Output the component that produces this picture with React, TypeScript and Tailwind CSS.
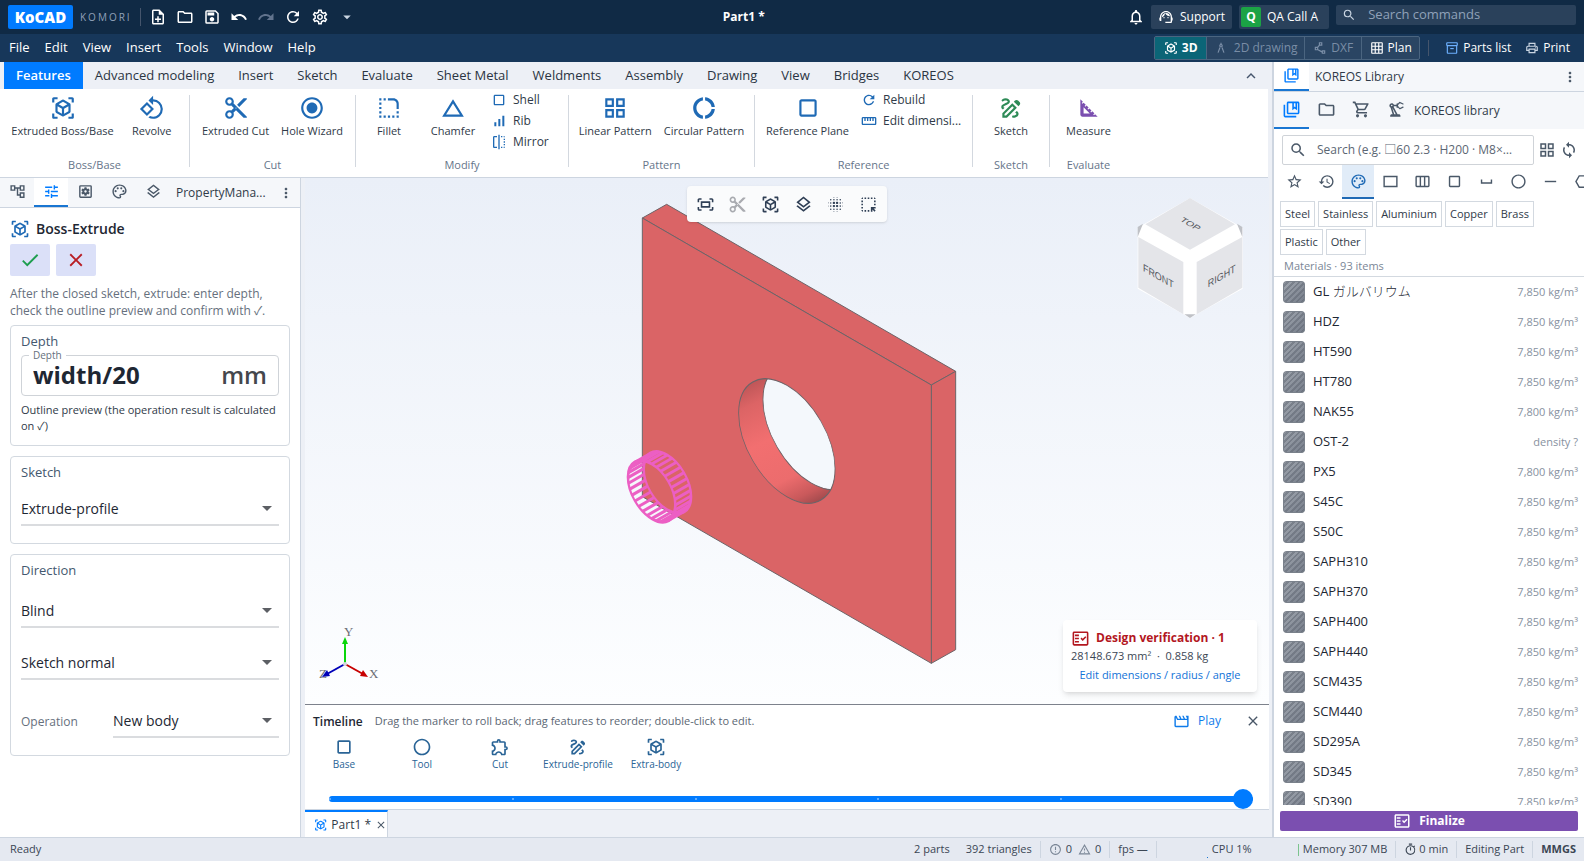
import React, { useState } from "react";
import type { IconType } from "react-icons";
import {
  MdArrowDropDown,
  MdBlurOn,
  MdChangeHistory,
  MdCheck,
  MdClose,
  MdContentCut,
  MdDonutLarge,
  MdErrorOutline,
  MdExpandLess,
  MdHighlightAlt,
  MdHistory,
  MdHorizontalRule,
  MdMoreVert,
  MdOutlineAccountTree,
  MdOutlineArchitecture,
  MdOutlineCircle,
  MdOutlineCollectionsBookmark,
  MdOutlineCropSquare,
  MdOutlineDraw,
  MdOutlineExtension,
  MdOutlineFactCheck,
  MdOutlineFitScreen,
  MdOutlineFlip,
  MdOutlineFolder,
  MdOutlineGridOn,
  MdOutlineGridView,
  MdOutlineHexagon,
  MdOutlineInventory2,
  MdOutlineLayers,
  MdOutlineMovieCreation,
  MdOutlineNoteAdd,
  MdOutlineNotifications,
  MdOutlinePalette,
  MdOutlinePolyline,
  MdOutlinePrecisionManufacturing,
  MdOutlinePrint,
  MdOutlineRectangle,
  MdOutlineSave,
  MdOutlineSettings,
  MdOutlineSettingsApplications,
  MdOutlineShoppingCart,
  MdOutlineStraighten,
  MdOutlineTimer,
  MdOutlineViewWeek,
  MdOutlineWarningAmber,
  MdRadioButtonChecked,
  MdRedo,
  MdRefresh,
  MdRotate90DegreesCcw,
  MdRoundedCorner,
  MdSearch,
  MdSignalCellularAlt,
  MdSpaceBar,
  MdSquareFoot,
  MdStarOutline,
  MdSupportAgent,
  MdSync,
  MdTune,
  MdUndo,
  MdViewInAr,
} from "react-icons/md";

interface ToolType {
  label: string;
  icon: IconType;
  color?: string;
}

interface GroupType {
  title: string;
  width: string;
  tools: ToolType[];
  small?: ToolType[];
  smallWidth?: string;
}

interface MaterialType {
  name: string;
  kana?: string;
  density: string;
}

const menus = ["File", "Edit", "View", "Insert", "Tools", "Window", "Help"];

const ribbonTabs = [
  "Features",
  "Advanced modeling",
  "Insert",
  "Sketch",
  "Evaluate",
  "Sheet Metal",
  "Weldments",
  "Assembly",
  "Drawing",
  "View",
  "Bridges",
  "KOREOS",
];

const quickActions: ToolType[] = [
  { label: "New", icon: MdOutlineNoteAdd },
  { label: "Open", icon: MdOutlineFolder },
  { label: "Save", icon: MdOutlineSave },
  { label: "Undo", icon: MdUndo },
  { label: "Redo", icon: MdRedo, color: "text-slate-500" },
  { label: "Rebuild", icon: MdRefresh },
  { label: "Settings", icon: MdOutlineSettings },
  { label: "More", icon: MdArrowDropDown, color: "text-slate-300" },
];

const groups: GroupType[] = [
  {
    title: "Boss/Base",
    width: "w-[190px]",
    tools: [
      { label: "Extruded Boss/Base", icon: MdViewInAr },
      { label: "Revolve", icon: MdRotate90DegreesCcw },
    ],
  },
  {
    title: "Cut",
    width: "w-[166px]",
    tools: [
      { label: "Extruded Cut", icon: MdContentCut },
      { label: "Hole Wizard", icon: MdRadioButtonChecked },
    ],
  },
  {
    title: "Modify",
    width: "w-[213px]",
    tools: [
      { label: "Fillet", icon: MdRoundedCorner },
      { label: "Chamfer", icon: MdChangeHistory },
    ],
    small: [
      { label: "Shell", icon: MdOutlineCropSquare },
      { label: "Rib", icon: MdSignalCellularAlt },
      { label: "Mirror", icon: MdOutlineFlip },
    ],
    smallWidth: "w-[70px]",
  },
  {
    title: "Pattern",
    width: "w-[186px]",
    tools: [
      { label: "Linear Pattern", icon: MdOutlineGridView },
      { label: "Circular Pattern", icon: MdDonutLarge },
    ],
  },
  {
    title: "Reference",
    width: "w-[218px]",
    tools: [{ label: "Reference Plane", icon: MdOutlineCropSquare }],
    small: [
      { label: "Rebuild", icon: MdRefresh },
      { label: "Edit dimensi...", icon: MdOutlineStraighten },
    ],
    smallWidth: "w-[100px]",
  },
  {
    title: "Sketch",
    width: "w-[77px]",
    tools: [{ label: "Sketch", icon: MdOutlineDraw, color: "text-[#2e8b57]" }],
  },
  {
    title: "Evaluate",
    width: "w-[77px]",
    tools: [{ label: "Measure", icon: MdSquareFoot, color: "text-[#7b4fb0]" }],
  },
];

const panelTabs: ToolType[] = [
  { label: "Feature tree", icon: MdOutlineAccountTree },
  { label: "Properties", icon: MdTune },
  { label: "Configurations", icon: MdOutlineSettingsApplications },
  { label: "Appearance", icon: MdOutlinePalette },
  { label: "Layers", icon: MdOutlineLayers },
];

const viewTools: ToolType[] = [
  { label: "Fit", icon: MdOutlineFitScreen },
  { label: "Section", icon: MdContentCut, color: "text-[#a9abb0]" },
  { label: "Orientation", icon: MdViewInAr },
  { label: "Display style", icon: MdOutlineLayers },
  { label: "Transparency", icon: MdBlurOn },
  { label: "Selection", icon: MdHighlightAlt },
];

const features: ToolType[] = [
  { label: "Base", icon: MdOutlineCropSquare },
  { label: "Tool", icon: MdOutlineCircle },
  { label: "Cut", icon: MdOutlineExtension },
  { label: "Extrude-profile", icon: MdOutlineDraw },
  { label: "Extra-body", icon: MdViewInAr },
];

const libraryTabs: ToolType[] = [
  { label: "Library", icon: MdOutlineCollectionsBookmark },
  { label: "Files", icon: MdOutlineFolder },
  { label: "Cart", icon: MdOutlineShoppingCart },
  { label: "Machines", icon: MdOutlinePrecisionManufacturing },
];

const categories: ToolType[] = [
  { label: "Favourites", icon: MdStarOutline },
  { label: "Recent", icon: MdHistory },
  { label: "Materials", icon: MdOutlinePalette },
  { label: "Plates", icon: MdOutlineRectangle },
  { label: "Gratings", icon: MdOutlineViewWeek },
  { label: "Square tubes", icon: MdOutlineCropSquare },
  { label: "Channels", icon: MdSpaceBar },
  { label: "Round tubes", icon: MdOutlineCircle },
  { label: "Flat bars", icon: MdHorizontalRule },
  { label: "Bolts", icon: MdOutlineHexagon },
];

const chips = ["Steel", "Stainless", "Aluminium", "Copper", "Brass", "Plastic", "Other"];

const materials: MaterialType[] = [
  { name: "GL", kana: "ガルバリウム", density: "7,850 kg/m³" },
  { name: "HDZ", density: "7,850 kg/m³" },
  { name: "HT590", density: "7,850 kg/m³" },
  { name: "HT780", density: "7,850 kg/m³" },
  { name: "NAK55", density: "7,800 kg/m³" },
  { name: "OST-2", density: "density ?" },
  { name: "PX5", density: "7,800 kg/m³" },
  { name: "S45C", density: "7,850 kg/m³" },
  { name: "S50C", density: "7,850 kg/m³" },
  { name: "SAPH310", density: "7,850 kg/m³" },
  { name: "SAPH370", density: "7,850 kg/m³" },
  { name: "SAPH400", density: "7,850 kg/m³" },
  { name: "SAPH440", density: "7,850 kg/m³" },
  { name: "SCM435", density: "7,850 kg/m³" },
  { name: "SCM440", density: "7,850 kg/m³" },
  { name: "SD295A", density: "7,850 kg/m³" },
  { name: "SD345", density: "7,850 kg/m³" },
  { name: "SD390", density: "7,850 kg/m³" },
];

function TitleBar() {
  return (
    <header className="flex h-[34px] shrink-0 items-center bg-[#102a45] px-2 text-white">
      <div className="flex h-6 w-[65px] items-center justify-center rounded-xs bg-[#007bff] text-[15px] font-extrabold">
        KoCAD
      </div>
      <span className="ml-[7px] text-[10px] tracking-[2px] text-slate-400">KOMORI</span>
      <span className="mr-1 ml-2 h-[18px] w-px bg-slate-600" />
      <div className="flex items-center">
        {quickActions.map(a => (
          <button
            key={a.label}
            aria-label={a.label}
            className={`flex w-[27px] justify-center ${a.color ?? ""}`}
          >
            <a.icon size={18} />
          </button>
        ))}
      </div>
      <h1 className="flex-1 text-center text-xs font-bold">Part1 *</h1>
      <button aria-label="Notifications" className="mr-1.5">
        <MdOutlineNotifications size={18} />
      </button>
      <button className="mr-[7px] flex h-6 w-[81px] items-center justify-center gap-1.5 rounded-xs bg-[#2a415b] text-xs font-medium">
        <MdSupportAgent size={16} />
        Support
      </button>
      <button className="mr-[7px] flex h-6 w-[90px] items-center gap-1.5 rounded-xs bg-[#2a415b] pl-0.5 text-xs font-medium">
        <span className="flex size-5 items-center justify-center rounded-xs bg-[#1ba345] font-bold">
          Q
        </span>
        QA Call A
      </button>
      <label className="mb-1 flex h-5 w-[240px] items-center rounded-xs bg-[#2a415b] pl-1.5">
        <MdSearch size={16} className="text-slate-300" />
        <input
          aria-label="Search commands"
          placeholder="Search commands"
          className="ml-3 w-full bg-transparent text-[13px] outline-none placeholder:text-slate-400"
        />
      </label>
    </header>
  );
}

function MenuBar() {
  return (
    <nav className="flex h-7 shrink-0 items-center bg-[#17375a] pr-[14px] pl-[9px] text-[13px] font-medium text-white">
      <div className="flex gap-[15px]">
        {menus.map(m => (
          <button key={m}>{m}</button>
        ))}
      </div>
      <div className="ml-auto flex h-6 overflow-hidden rounded-xs border border-[#4b6580] bg-[#2a4563] text-xs">
        <button className="flex w-[51px] items-center justify-center gap-1 bg-[#0b6577] font-bold">
          <MdViewInAr size={14} />
          3D
        </button>
        <button className="flex w-[98px] items-center justify-center gap-1.5 border-l border-[#4b6580] text-slate-400/80">
          <MdOutlineArchitecture size={14} />
          2D drawing
        </button>
        <button className="flex w-[57px] items-center justify-center gap-1 border-l border-[#4b6580] text-slate-400/80">
          <MdOutlinePolyline size={14} />
          DXF
        </button>
        <button className="flex w-[58px] items-center justify-center gap-1 border-l border-[#4b6580]">
          <MdOutlineGridOn size={14} />
          Plan
        </button>
      </div>
      <span className="mx-2 h-4 w-px bg-slate-600" />
      <button className="ml-2 flex items-center gap-1 text-xs">
        <MdOutlineInventory2 size={14} className="text-[#6db1ff]" />
        Parts list
      </button>
      <button className="ml-3.5 flex items-center gap-1 text-xs">
        <MdOutlinePrint size={14} className="text-slate-300" />
        Print
      </button>
    </nav>
  );
}

function Ribbon() {
  const [active, setActive] = useState("Features");

  return (
    <div className="mr-1 shrink-0">
      <div className="flex h-[27px] items-center bg-[#edf0f6] pl-1">
        {ribbonTabs.map(t => (
          <button
            key={t}
            onClick={() => setActive(t)}
            className={`h-full px-3 text-[13px] ${
              active === t ? "bg-[#007bff] font-semibold text-white" : "font-medium text-[#2a3442]"
            }`}
          >
            {t}
          </button>
        ))}
        <button aria-label="Collapse ribbon" className="mr-2 ml-auto text-slate-600">
          <MdExpandLess size={18} />
        </button>
      </div>
      <div className="flex h-[89px] border-b border-[#cdd5e0] bg-white">
        {groups.map((g, i) => (
          <section key={g.title} className={`flex pt-1.5 pb-1 ${g.width}`}>
            <div className="flex min-w-0 flex-1 flex-col">
              <div className="flex flex-1 justify-center gap-3">
                {g.tools.map(t => (
                  <button
                    key={t.label}
                    className="flex min-w-[52px] flex-col items-center text-[11px] text-[#2f3a48]"
                  >
                    <t.icon size={26} className={t.color ?? "text-[#1f6ab5]"} />
                    <span className="mt-0.5 whitespace-nowrap">{t.label}</span>
                  </button>
                ))}
                {g.small && (
                  <div className={`-mt-1.5 flex flex-col ${g.smallWidth}`}>
                    {g.small.map(t => (
                      <button
                        key={t.label}
                        className="flex h-[21px] items-center gap-1.5 text-xs whitespace-nowrap text-[#2f3a48]"
                      >
                        <t.icon size={16} className="shrink-0 text-[#1f6ab5]" />
                        {t.label}
                      </button>
                    ))}
                  </div>
                )}
              </div>
              <h2 className="text-center text-[11px] text-[#66758a]">{g.title}</h2>
            </div>
            {i < groups.length - 1 && <span className="mb-1.5 w-px bg-[#d3d8df]" />}
          </section>
        ))}
      </div>
    </div>
  );
}

function SelectField({ id, label, value }: { id: string; label: string; value: string }) {
  return (
    <div className="relative flex-1 border-b-2 border-[#dadcdf]">
      <select
        id={id}
        aria-label={label}
        defaultValue={value}
        className="h-[30px] w-full appearance-none bg-transparent text-sm font-medium text-[#1e2733] outline-none"
      >
        <option>{value}</option>
      </select>
      <MdArrowDropDown
        size={24}
        className="pointer-events-none absolute top-0.5 right-0 text-[#5c5f64]"
      />
    </div>
  );
}

function PropertyPanel() {
  return (
    <aside className="flex w-[301px] shrink-0 flex-col border-r border-[#cdd5e0] bg-white">
      <div className="flex h-[30px] items-center border-b border-[#cdd5e0] bg-[#f5f7fa]">
        {panelTabs.map((t, i) => (
          <button
            key={t.label}
            aria-label={t.label}
            className={`flex h-full w-[34px] items-center justify-center border-b-2 ${
              i === 1 ? "border-[#1976d2] bg-white text-[#007bff]" : "border-transparent text-[#4a5868]"
            }`}
          >
            <t.icon size={17} />
          </button>
        ))}
        <span className="ml-1.5 flex-1 text-xs font-medium whitespace-nowrap text-[#2f3a48]">
          PropertyMana...
        </span>
        <button aria-label="Panel menu" className="mr-1.5 text-[#4a5868]">
          <MdMoreVert size={16} />
        </button>
      </div>

      <div className="flex flex-col px-[10px] pt-[11px]">
        <h2 className="flex items-center gap-1.5 text-sm font-semibold text-[#1e2733]">
          <MdViewInAr size={20} className="text-[#1f6ab5]" />
          Boss-Extrude
        </h2>
        <div className="mt-[5px] flex gap-1.5">
          <button aria-label="Confirm" className="flex h-8 w-10 items-center justify-center rounded-xs bg-[#dbe0f8]">
            <MdCheck size={22} className="text-[#1e9e4f]" />
          </button>
          <button aria-label="Cancel" className="flex h-8 w-10 items-center justify-center rounded-xs bg-[#dbe0f8]">
            <MdClose size={22} className="text-[#b81d24]" />
          </button>
        </div>
        <p className="mt-[9px] text-xs leading-[17px] text-[#66707d]">
          After the closed sketch, extrude: enter depth,
          <br />
          check the outline preview and confirm with ✓.
        </p>

        <section className="mt-1.5 h-[121px] rounded-sm border border-[#d3d9e0] px-[10px] pt-[5px]">
          <h3 className="text-[13px] leading-5 font-medium text-[#44586f]">Depth</h3>
          <fieldset className="-mt-1 flex h-[49px] items-center rounded-sm border border-[#cfd3d8] px-[11px] pb-2">
            <legend className="-ml-1 px-1 text-[10px] leading-4 text-[#66707d]">Depth</legend>
            <input
              aria-label="Depth"
              defaultValue="width/20"
              className="w-0 flex-1 text-2xl font-bold text-[#1e2733] outline-none"
            />
            <span className="text-2xl font-semibold text-[#44474d]">mm</span>
          </fieldset>
          <p className="mt-1.5 text-[11px] leading-4 text-[#2f3a48]">
            Outline preview (the operation result is calculated on ✓)
          </p>
        </section>

        <section className="mt-[10px] h-[88px] rounded-sm border border-[#d3d9e0] px-[10px] pt-[5px]">
          <h3 className="text-[13px] leading-5 font-medium text-[#44586f]">Sketch</h3>
          <div className="mt-3 flex">
            <SelectField id="sketch" label="Sketch" value="Extrude-profile" />
          </div>
        </section>

        <section className="mt-[10px] h-[202px] rounded-sm border border-[#d3d9e0] px-[10px] pt-[5px]">
          <h3 className="text-[13px] leading-5 font-medium text-[#44586f]">Direction</h3>
          <div className="mt-4 flex">
            <SelectField id="end" label="End condition" value="Blind" />
          </div>
          <div className="mt-5 flex">
            <SelectField id="normal" label="Direction" value="Sketch normal" />
          </div>
          <div className="mt-[26px] flex items-center">
            <label htmlFor="operation" className="w-[92px] text-xs text-[#66707d]">
              Operation
            </label>
            <SelectField id="operation" label="Operation" value="New body" />
          </div>
        </section>
      </div>
    </aside>
  );
}

// ribs between the two rims of the extrude preview
const ribs = Array.from({ length: 32 }, (_, i) => {
  const a = (i / 32) * Math.PI * 2;
  const x = 82 * Math.cos(a) * 0.866;
  const y = 82 * Math.cos(a) * 0.5 + 82 * Math.sin(a);
  return { x, y };
});

function Model() {
  return (
    <svg viewBox="-9 33 1140 1500" className="h-[500px] w-[380px]">
      <defs>
        <linearGradient id="wall" gradientUnits="userSpaceOnUse" x1="450" y1="590" x2="640" y2="980">
          <stop offset="0" stopColor="#b65254" />
          <stop offset="0.18" stopColor="#dc6465" />
          <stop offset="0.45" stopColor="#f26f70" />
          <stop offset="0.75" stopColor="#ec6c6d" />
          <stop offset="0.9" stopColor="#c9595b" />
          <stop offset="1" stopColor="#9c484b" />
        </linearGradient>
        <clipPath id="bore">
          <circle r="167" transform="matrix(0.866 0.5 0 1 560.5 783)" />
        </clipPath>
      </defs>
      <g fill="#da6466" stroke="#6d6468" strokeWidth="3" strokeLinejoin="round">
        <path d="M127 114 200 73 1067 574 994 615Z" />
        <path d="M994 615 1067 574 1067 1409 994 1450Z" />
        <path d="M127 114 994 615 994 1450 127 950Z" />
      </g>
      <g clipPath="url(#bore)">
        <rect x="400" y="580" width="320" height="400" fill="url(#wall)" />
        <circle
          r="167"
          transform="matrix(0.866 0.5 0 1 633.5 742)"
          fill="#f4f8fc"
          stroke="#6d6468"
          strokeWidth="3"
        />
      </g>
      <circle
        r="167"
        transform="matrix(0.866 0.5 0 1 560.5 783)"
        fill="none"
        stroke="#6d6468"
        strokeWidth="3"
      />
      <g fill="none" stroke="#ec5fc4" strokeWidth="9">
        <circle r="82" transform="matrix(0.866 0.5 0 1 155 934)" />
        <circle r="82" transform="matrix(0.866 0.5 0 1 202 907)" />
        {ribs.map((r, i) => (
          <line key={i} x1={155 + r.x} y1={934 + r.y} x2={202 + r.x} y2={907 + r.y} />
        ))}
      </g>
    </svg>
  );
}

function ViewCube() {
  return (
    <svg viewBox="0 0 318 366" className="absolute top-[19px] right-[26px] h-[122px] w-[106px]">
      <path d="M159 3 317 92 317 275 159 363 2 275 2 92Z" fill="#fff" />
      <path d="M2 90 18 80 2 120ZM316 90 300 80 316 120ZM142 352 176 352 159 363Z" fill="#bfc1c6" />
      <g fill="#e4e5e9">
        <path d="M159 3 294 82 159 158 25 82Z" />
        <path d="M4 120 139 195 139 352 4 272Z" />
        <path d="M179 195 316 120 316 272 179 352Z" />
      </g>
      <g fill="#55585e" fontFamily="Liberation Sans, sans-serif" fontSize="31" textAnchor="middle">
        <text transform="matrix(0.866 0.5 -0.6 0.5 154 86)">TOP</text>
        <text transform="matrix(0.866 0.5 0 1 64 248)">FRONT</text>
        <text transform="matrix(0.866 -0.5 0 1 254 248)">RIGHT</text>
      </g>
    </svg>
  );
}

function Triad() {
  return (
    <svg viewBox="0 -8 72 68" className="absolute bottom-[18px] left-3 h-[68px] w-[72px]">
      <path d="M28 38V17" stroke="#0bd60b" strokeWidth="2" />
      <path d="M28 11 31 18H25Z" fill="#0bd60b" />
      <path d="M28 38 46 48" stroke="#c80000" strokeWidth="2" />
      <path d="M51 51 43 50 46 44Z" fill="#c80000" />
      <path d="M28 38 10 48" stroke="#0000b8" strokeWidth="2" />
      <path d="M5 51 13 50 10 44Z" fill="#0000b8" />
      <circle cx="28" cy="38" r="2" fill="#d5d8dc" />
      <g fill="#6b6e75" fontFamily="Liberation Serif, serif" fontSize="13">
        <text x="27" y="10">Y</text>
        <text x="52" y="52">X</text>
        <text x="2" y="52">Z</text>
      </g>
    </svg>
  );
}

function Viewport() {
  return (
    <div className="relative flex min-h-0 flex-1 items-center justify-center overflow-hidden bg-linear-to-b from-[#eaeff8] to-[#fdfeff]">
      <Model />
      <div className="absolute top-2 left-1/2 flex h-9 w-[200px] -translate-x-1/2 items-center justify-around rounded-sm bg-[#fafbfc] px-0.5 shadow">
        {viewTools.map(t => (
          <button key={t.label} aria-label={t.label} className={t.color ?? "text-[#2f3f55]"}>
            <t.icon size={19} />
          </button>
        ))}
      </div>
      <ViewCube />
      <Triad />
      <div className="absolute right-3 bottom-3 flex h-[72px] w-[194px] flex-col rounded-sm bg-white px-2 pt-2 shadow-md">
        <h2 className="flex items-center gap-1.5 text-xs leading-5 font-bold text-[#b3171f]">
          <MdOutlineFactCheck size={19} />
          Design verification · 1
        </h2>
        <p className="text-[11px] leading-4 text-[#3b4654]">28148.673 mm² &nbsp;·&nbsp; 0.858 kg</p>
        <a href="#dimensions" className="mt-[3px] text-center text-[11px] leading-4 text-[#1273d8]">
          Edit dimensions / radius / angle
        </a>
      </div>
    </div>
  );
}

function Timeline() {
  const [marker, setMarker] = useState(5);

  return (
    <section className="h-[105px] shrink-0 border-t border-[#7d828c] bg-white">
      <div className="flex h-8 items-center px-2">
        <h2 className="mt-0.5 text-xs font-semibold text-[#1e2733]">Timeline</h2>
        <p className="ml-3 text-[11px] text-[#5b6673]">
          Drag the marker to roll back; drag features to reorder; double-click to edit.
        </p>
        <button className="ml-auto flex items-center gap-2 text-xs text-[#0f7bea]">
          <MdOutlineMovieCreation size={17} />
          Play
        </button>
        <button aria-label="Close timeline" className="ml-6 text-[#4a5868]">
          <MdClose size={16} />
        </button>
      </div>
      <ol className="flex">
        {features.map(f => (
          <li key={f.label}>
            <button className="flex w-[78px] flex-col items-center text-[10px] leading-[14px] text-[#2a6496]">
              <f.icon size={20} />
              <span className="whitespace-nowrap">{f.label}</span>
            </button>
          </li>
        ))}
      </ol>
      <div className="relative mt-[18px] mr-4 ml-6 flex h-5 items-center">
        <input
          type="range"
          aria-label="Timeline marker"
          min={0}
          max={5}
          value={marker}
          onChange={e => setMarker(parseInt(e.target.value))}
          className="h-1.5 w-full appearance-none rounded-full bg-[#007bff] [&::-webkit-slider-thumb]:size-5 [&::-webkit-slider-thumb]:appearance-none [&::-webkit-slider-thumb]:rounded-full [&::-webkit-slider-thumb]:bg-[#007bff]"
        />
        {/* step marks, the last one sits under the thumb */}
        <div className="pointer-events-none absolute inset-x-0 flex justify-between pr-2">
          {[0, 1, 2, 3, 4, 5].map(n => (
            <span key={n} className={`size-0.5 rounded-full ${n < 5 ? "bg-[#7fbdff]" : ""}`} />
          ))}
        </div>
      </div>
    </section>
  );
}

function Library() {
  return (
    <aside className="flex w-[312px] shrink-0 flex-col border-l-2 border-[#cdd5e0] bg-white">
      <div className="flex h-[30px] shrink-0 items-center border-b border-[#cdd5e0] bg-[#f5f7fa] text-xs font-medium text-[#2f3a48]">
        <span className="mr-1.5 flex h-full w-[35px] items-center justify-center border-b-2 border-[#1976d2] bg-white text-[#007bff]">
          <MdOutlineCollectionsBookmark size={17} />
        </span>
        <span className="flex-1">KOREOS Library</span>
        <button aria-label="Library menu" className="mr-1.5 text-[#4a5868]">
          <MdMoreVert size={16} />
        </button>
      </div>
      <div className="flex h-[37px] shrink-0 items-center bg-[#f5f7fa]">
        {libraryTabs.map((t, i) => (
          <button
            key={t.label}
            aria-label={t.label}
            className={`flex h-full w-[35px] items-center justify-center border-b-2 ${
              i === 0 ? "border-[#1976d2] text-[#007bff]" : "border-transparent text-[#4a5868]"
            }`}
          >
            <t.icon size={19} />
          </button>
        ))}
        <span className="text-xs font-medium text-[#2f3a48]">KOREOS library</span>
      </div>
      <div className="flex shrink-0 items-center gap-1 py-1.5 pr-1.5 pl-2">
        <label className="flex h-[30px] min-w-0 flex-1 items-center rounded-xs border border-[#cfd3d8] pl-1.5">
          <MdSearch size={18} className="shrink-0 text-[#4a5868]" />
          <input
            aria-label="Search the library"
            placeholder="Search (e.g. □60 2.3 · H200 · M8×…"
            className="mr-1 ml-2.5 w-full text-xs outline-none placeholder:text-[#5b6673]"
          />
        </label>
        <button aria-label="Grid view" className="text-[#4a5868]">
          <MdOutlineGridView size={18} />
        </button>
        <button aria-label="Sync" className="text-[#4a5868]">
          <MdSync size={18} />
        </button>
      </div>
      <div className="-mt-1.5 flex h-[34px] shrink-0 overflow-hidden pl-1">
        {categories.map((c, i) => (
          <button
            key={c.label}
            aria-label={c.label}
            className={`flex w-8 shrink-0 items-center justify-center border-b-2 ${
              i === 2 ? "border-[#1f6ab5] bg-[#e1ecf8] text-[#1f6ab5]" : "border-transparent text-[#4a5868]"
            }`}
          >
            <c.icon size={17} />
          </button>
        ))}
      </div>
      <div className="mt-0.5 flex shrink-0 flex-wrap gap-x-[3px] gap-y-0.5 pr-10 pl-1.5">
        {chips.map(c => (
          <button key={c} className="h-[26px] border border-[#d3d9e0] px-1 text-[11px] text-[#2f3a48]">
            {c}
          </button>
        ))}
      </div>
      <p className="shrink-0 border-b border-[#d3d9e0] pt-0.5 pb-px pl-[10px] text-[11px] leading-[18px] text-[#7a8696]">
        Materials · 93 items
      </p>
      <ul className="min-h-0 flex-1 overflow-hidden">
        {materials.map(m => (
          <li key={m.name} className="flex h-[30px] items-center pr-1.5 pl-[9px]">
            <span className="size-[22px] rounded-sm bg-linear-to-br from-[#a3a9b1] to-[#757c89]">
              <span className="block size-full rounded-sm border border-[#7a818b] bg-[repeating-linear-gradient(135deg,transparent_0_2px,#5d647080_2px_4px)]" />
            </span>
            <span className="ml-2 flex-1 text-[13px] font-medium text-[#1e2733]">
              {m.name} {m.kana && <span className="font-light">{m.kana}</span>}
            </span>
            <span className="text-[11px] text-[#8791a0]">{m.density}</span>
          </li>
        ))}
      </ul>
      <div className="shrink-0 p-1.5">
        <button className="flex h-5 w-full items-center justify-center gap-2 rounded-xs bg-[#7b4fb0] text-xs font-bold text-white">
          <MdOutlineFactCheck size={18} />
          Finalize
        </button>
      </div>
    </aside>
  );
}

function StatusBar() {
  return (
    <footer className="flex h-6 shrink-0 items-center border-t border-[#cdd5e0] bg-[#e5e9f1] pr-2 pl-[10px] text-[11px] text-[#3b4654]">
      <span className="flex-1">Ready</span>
      <span className="mr-4">2 parts</span>
      <span className="border-r border-[#cdd5e0] pr-2">392 triangles</span>
      <span className="flex items-center gap-1 border-r border-[#cdd5e0] px-2">
        <MdErrorOutline size={13} className="text-[#7a8696]" />0
        <MdOutlineWarningAmber size={13} className="ml-0.5 text-[#7a8696]" />0
      </span>
      <span className="border-r border-[#cdd5e0] px-2">fps —</span>
      <span className="ml-[50px] flex w-[91px] items-end gap-1">
        <span className="size-px bg-[#1976d2]" />
        CPU 1%
      </span>
      <span className="flex items-center gap-1 border-r border-[#cdd5e0] pr-2">
        <span className="h-3 w-px bg-[#7cc48f]" />
        Memory 307 MB
      </span>
      <span className="flex items-center gap-0.5 border-r border-[#cdd5e0] px-2">
        <MdOutlineTimer size={13} />0 min
      </span>
      <span className="border-r border-[#cdd5e0] px-2">Editing Part</span>
      <span className="pl-2 font-bold">MMGS</span>
    </footer>
  );
}

export default function App() {
  return (
    <div className="flex h-screen flex-col overflow-hidden bg-[#edf0f6] font-['Open_Sans','Noto_Sans_CJK_JP',sans-serif]">
      <TitleBar />
      <MenuBar />
      <div className="flex min-h-0 flex-1">
        <div className="flex min-w-0 flex-1 flex-col">
          <Ribbon />
          <div className="flex min-h-0 flex-1">
            <PropertyPanel />
            <main className="mr-[3px] ml-1 flex min-w-0 flex-1 flex-col">
              <Viewport />
              <Timeline />
              <div className="flex h-7 shrink-0 border-t border-[#cdd5e0]">
                <div className="flex w-[83px] items-center gap-1 border-t-2 border-r border-t-[#007bff] border-r-[#cdd5e0] bg-white pl-[9px] text-xs font-medium text-[#2f3a48]">
                  <MdViewInAr size={16} className="text-[#007bff]" />
                  <span className="whitespace-nowrap">Part1 *</span>
                  <button aria-label="Close Part1" className="text-[#4a5868]">
                    <MdClose size={12} />
                  </button>
                </div>
              </div>
            </main>
          </div>
        </div>
        <Library />
      </div>
      <StatusBar />
    </div>
  );
}
